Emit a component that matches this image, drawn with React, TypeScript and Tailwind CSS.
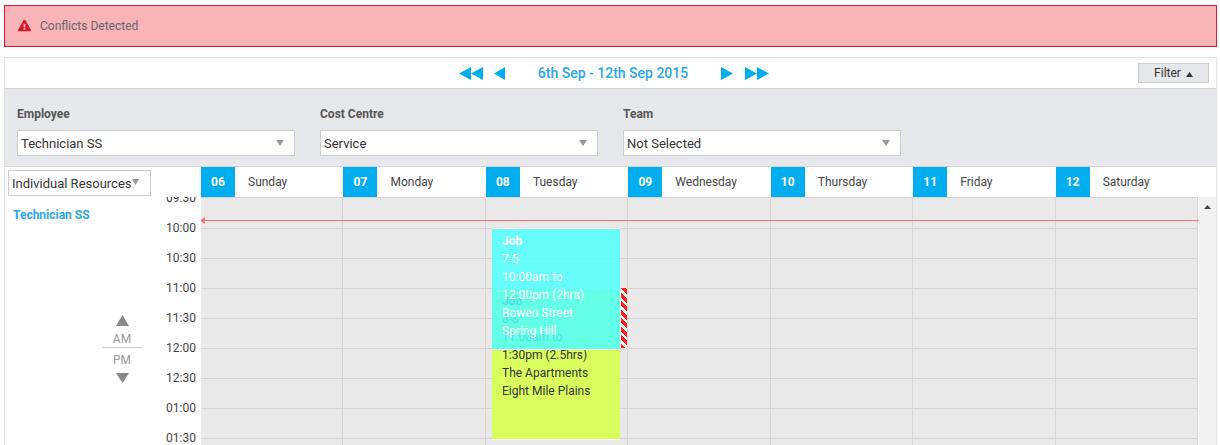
import React from 'react';
import { FaExclamationTriangle } from 'react-icons/fa';

const days = [
    { num: '06', name: 'Sunday' },
    { num: '07', name: 'Monday' },
    { num: '08', name: 'Tuesday' },
    { num: '09', name: 'Wednesday' },
    { num: '10', name: 'Thursday' },
    { num: '11', name: 'Friday' },
    { num: '12', name: 'Saturday' },
];

const times = ['09:30', '10:00', '10:30', '11:00', '11:30', '12:00', '12:30', '01:00', '01:30'];

const filters = [
    { label: 'Employee', value: 'Technician SS' },
    { label: 'Cost Centre', value: 'Service' },
    { label: 'Team', value: 'Not Selected' },
];

const Tri = ({ dir, className }: { dir: 'l' | 'r' | 'u' | 'd'; className: string }) => {
    const pts = { l: '12,0 12,12 0,6', r: '0,0 12,6 0,12', u: '6,0 12,12 0,12', d: '0,0 12,0 6,12' }[dir];
    return (
        <svg viewBox="0 0 12 12" preserveAspectRatio="none" className={className}>
            <polygon points={pts} fill="currentColor" />
        </svg>
    );
};

const DropArrow = () => <Tri dir="d" className="w-[8px] h-[6px] text-[#999]" />;

const App: React.FC = () => {
    return (
        <div className="w-[1220px] h-[445px] overflow-hidden bg-white font-['Roboto',sans-serif] text-[#444]">
            <div className="ml-[4px] w-[1213px] mt-[5px] h-[42px] flex items-center bg-[#f9b4ba] border border-[#e0162b] pl-[13px]">
                <FaExclamationTriangle className="w-[13px] h-[13px] mb-[2px] text-[#d9162b]" />
                <span className="ml-[9px] text-[12px] text-[#666]">Conflicts Detected</span>
            </div>

            <div className="ml-[4px] w-[1213px] mt-[10px] border border-[#e2e2e2] border-b-0">
                <div className="relative h-[30px] flex items-center justify-center">
                    <div className="flex items-center text-[#00aeef] ml-[7px]">
                        <Tri dir="l" className="w-[12px] h-[13px]" />
                        <Tri dir="l" className="w-[12px] h-[13px]" />
                        <Tri dir="l" className="w-[11px] h-[13px] ml-[11px]" />
                        <span className="ml-[33px] mr-[33px] text-[14px] font-medium text-[#29a8e8]">6th Sep - 12th Sep 2015</span>
                        <Tri dir="r" className="w-[12px] h-[13px]" />
                        <Tri dir="r" className="w-[12px] h-[13px] ml-[12px]" />
                        <Tri dir="r" className="w-[12px] h-[13px]" />
                    </div>
                    <button className="absolute right-[7px] top-[5px] w-[71px] h-[20px] flex items-center justify-center bg-[#e6e7eb] border border-[#ccc] text-[12px] text-[#333]">
                        Filter
                        <Tri dir="u" className="w-[7px] h-[5px] ml-[5px] mt-[2px]" />
                    </button>
                </div>

                <div className="h-[79px] bg-[#e7e8ec] border-y border-[#d4d4d4] flex gap-[25px] pl-[12px] pt-[17px]">
                    {filters.map((f) => (
                        <div key={f.label} className="w-[278px]">
                            <div className="h-[16px] leading-[16px] text-[12px] font-bold text-[#555]">{f.label}</div>
                            <div className="mt-[8px] h-[26px] flex items-center justify-between bg-white border border-[#ccc] pl-[3px] pr-[10px]">
                                <span className="text-[13px] leading-[26px] text-[#333] pt-px">{f.value}</span>
                                <DropArrow />
                            </div>
                        </div>
                    ))}
                </div>

                <div className="flex">
                    <div className="w-[196px] shrink-0 flex flex-col">
                        <div className="h-[30px] pl-[3px] pt-[3px]">
                            <div className="w-[143px] h-[26px] flex items-start border border-[#ccc] pl-[3px]">
                                <span className="text-[13px] leading-[26px] text-[#333]">Individual Resources</span>
                                <Tri dir="d" className="w-[7px] h-[6px] mt-[8px] text-[#999]" />
                            </div>
                        </div>
                        <div className="flex h-[248px]">
                            <div className="w-[146px] relative">
                                <div className="pl-[8px] pt-[9px] text-[12px] leading-[18px] font-bold text-[#29a8e8]">Technician SS</div>
                                <div className="absolute left-[97px] top-[118px] w-[40px] flex flex-col items-center text-[#888]">
                                    <Tri dir="u" className="w-[13px] h-[11px]" />
                                    <div className="mt-[5px] w-full h-[16px] leading-[16px] text-center text-[12px] text-[#999]">AM</div>
                                    <div className="w-full border-t border-[#ccc] h-[20px] leading-[24px] text-center text-[12px] text-[#999]">PM</div>
                                    <Tri dir="d" className="w-[13px] h-[10px] mt-[6px]" />
                                </div>
                            </div>
                            <div className="w-[50px] overflow-hidden">
                                <div className="-mt-[14px]">
                                    {times.map((t) => (
                                        <div key={t} className="h-[30px] leading-[30px] text-right pr-[5px] text-[12px] text-[#444]">{t}</div>
                                    ))}
                                </div>
                            </div>
                        </div>
                    </div>

                    <div className="flex-1 min-w-0 flex flex-col">
                        <div className="h-[30px] flex">
                            {days.map((d) => (
                                <div key={d.num} className="w-[142.45px] flex items-center">
                                    <div className="w-[34px] h-[30px] leading-[30px] text-center bg-[#00aeef] text-white text-[12px] font-bold">{d.num}</div>
                                    <span className="ml-[13px] text-[12px] text-[#444]">{d.name}</span>
                                </div>
                            ))}
                        </div>
                        <div className="relative flex h-[248px] overflow-hidden">
                            <div className="flex w-[997.15px] bg-[#e9e9e9] border-t border-[#d8d2d2]">
                                {days.map((d) => (
                                    <div key={d.num} className="relative w-[142.45px] pt-px border-r border-[#d8d2d2]">
                                        {times.map((t) => (
                                            <div key={t} className="h-[30px] border-b border-[#d8d2d2]" />
                                        ))}
                                    </div>
                                ))}
                            </div>
                            <div className="flex-1 bg-[#f1f1f1] border-l border-white flex justify-center pt-[8px]">
                                <Tri dir="u" className="w-[7px] h-[4px] text-[#444]" />
                            </div>

                            <div className="absolute left-[3px] right-[17px] top-[23px] h-px bg-[#ff7070]" />
                            <Tri dir="l" className="absolute left-[-1px] top-[20px] w-[5px] h-[7px] text-[#ff7070]" />

                            <div className="absolute left-[291px] top-[91px] w-[128px] h-[152px] bg-[#d9ff5e] border-y border-white pl-[10px] pt-[3px] text-[12px] leading-[18px] text-[#333]">
                                <div className="font-bold">Job</div>
                                <div>8-8</div>
                                <div>11:00am to</div>
                                <div>1:30pm (2.5hrs)</div>
                                <div>The Apartments</div>
                                <div>Eight Mile Plains</div>
                            </div>
                            <div className="absolute left-[291px] top-[31px] w-[128px] h-[122px] bg-[#4fffff]/85 border-y border-white pl-[10px] pt-[3px] text-[12px] leading-[18px] text-white">
                                <div className="font-bold">Job</div>
                                <div>7-5</div>
                                <div>10:00am to</div>
                                <div>12:00pm (2hrs)</div>
                                <div>Bowen Street</div>
                                <div>Spring Hill</div>
                            </div>
                            <div className="absolute left-[420px] top-[91px] w-[6px] h-[60px] bg-[repeating-linear-gradient(45deg,#ff2020_0px,#ff2020_3.5px,#ffffff_3.5px,#ffffff_6px)]" />
                        </div>
                    </div>
                </div>
            </div>
        </div>
    );
};

export default App;
